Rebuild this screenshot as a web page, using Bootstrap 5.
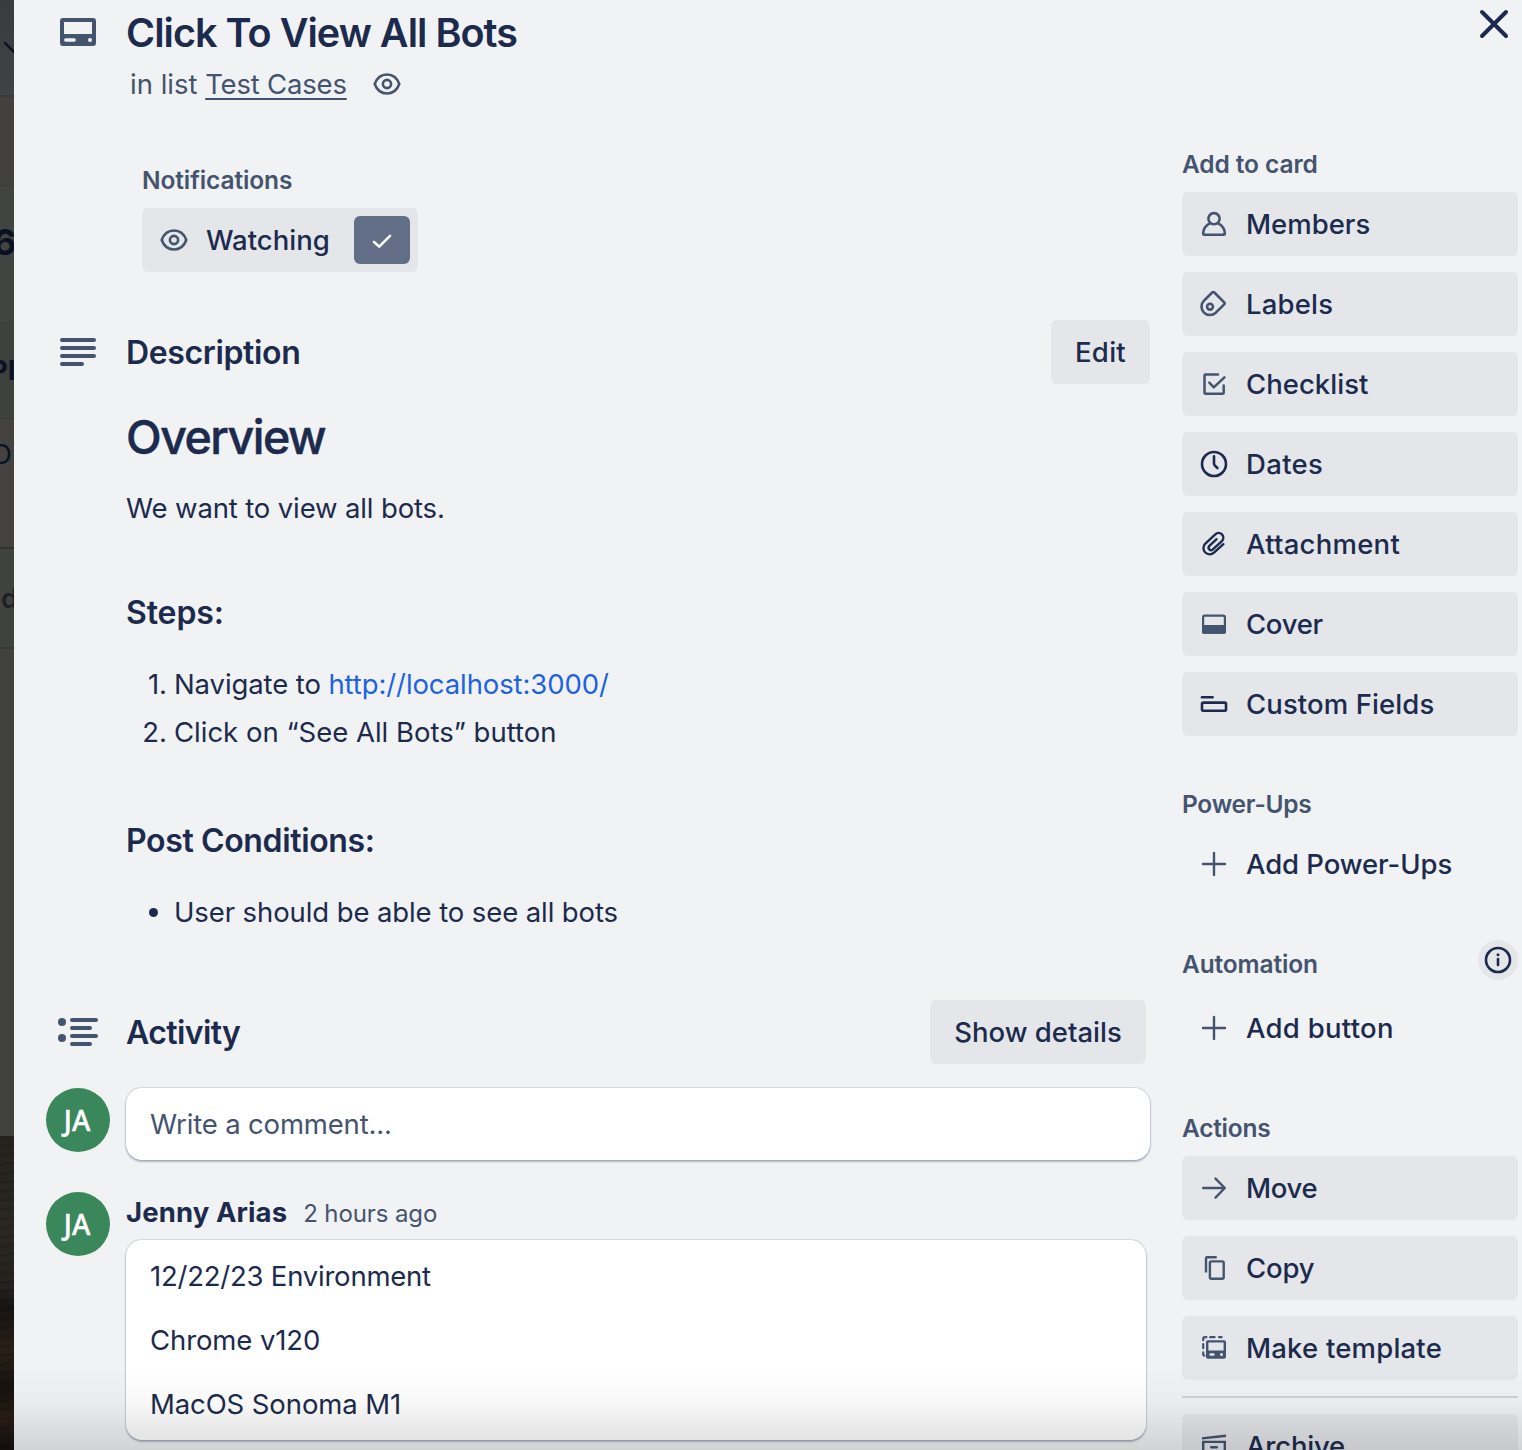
<!DOCTYPE html>
<html lang="en">
<head>
<meta charset="utf-8">
<meta name="viewport" content="width=device-width, initial-scale=1">
<title>Click To View All Bots</title>
<link href="https://cdn.jsdelivr.net/npm/bootstrap@5.3.0/dist/css/bootstrap.min.css" rel="stylesheet">
<script src="https://cdn.jsdelivr.net/npm/bootstrap@5.3.0/dist/js/bootstrap.bundle.min.js"></script>
<style>
:root{--ink:#1c2b4d;--muted:#44546f;--panel:#f1f2f4;--chip:#e4e6ea}
body{font-family:Inter,"Noto Sans",sans-serif;font-size:27.5px;line-height:40px;color:var(--ink);background:var(--panel);letter-spacing:-.1px}
.screen{height:1450px}
svg{display:block;flex:none;fill:none;stroke:currentColor;stroke-linecap:round;stroke-linejoin:round}
.tone-muted{color:var(--muted)}
.tone-ink{color:var(--ink)}

/* dimmed board behind the dialog */
.board-edge{width:14px;flex:none;background:#404040;color:#0a1122}
.board-edge>div{overflow:hidden;white-space:nowrap;flex:none;display:flex;align-items:center}
.edge-top{height:95px;background:linear-gradient(#3a3b3d,#404246)}
.edge-a{height:90px;border-top:2px solid #38393b;background:#434140}
.edge-b{height:137px;border-top:1px solid #3a3a3a;background:#414441;font-size:36px;font-weight:700;padding-bottom:24px}
.edge-c{height:96px;background:#3f413f;font-weight:700}
.edge-d{height:129px;border-top:1px solid #363839;background:#434241;padding-bottom:58px}
.edge-e{height:100px;border-top:2px solid #303236;background:#3f423f;font-weight:600;color:#1c1f26}
.edge-f{height:489px;border-top:2px solid #35373a;background:#414140}
.edge-g{height:314px;background:repeating-linear-gradient(172deg,rgba(0,0,0,.12) 0 3px,transparent 3px 9px),linear-gradient(#25231d,#2b2822 30%,#24221e 48%,#171412 55%,#2b2019 68%,#17120f 80%,#271c15 90%,#120e0b)}
.shift-6{margin-left:-7px}.shift-p{margin-left:-10px;letter-spacing:0}.shift-d{margin-left:-8px}.shift-e{margin-left:1px}

/* main column */
.main-col{width:1136px;flex:none;padding-top:9px}
.gutter{width:112px;flex:none}
.gutter-icon{padding-left:44px}
.gutter-avatar{padding-left:32px}
.indent{padding-left:112px}
.card-title-lg{font-size:39.5px;line-height:48px;font-weight:600;letter-spacing:-.95px;margin:0}
.sub-line{line-height:36px;height:36px;margin-top:9px;padding-left:116px;letter-spacing:0}
.sub-line a{color:inherit;text-decoration-thickness:2px;text-underline-offset:4px;letter-spacing:-.2px}
.sub-line svg{margin-left:24px}
.label-sm{font-size:24.5px;line-height:32px;font-weight:600;color:var(--muted);margin:0}
.notif{margin-top:62px;padding-left:128px}
.watch{width:276px;height:64px;margin-top:12px;padding:0 8px 0 16px;background:var(--chip);border-radius:6px;font-weight:500;letter-spacing:0}
.watch-tick{width:56px;height:48px;background:#626f86;border-radius:6px;color:#fff}
.sect{height:64px}
.sect-title{font-size:32px;line-height:40px;font-weight:600;letter-spacing:-.36px;margin:0;padding-top:2px}
.indent .sect-title{padding-top:1px;margin:64px 0 0}
.chip-btn{--bs-btn-font-size:27.5px;--bs-btn-font-weight:500;--bs-btn-line-height:40px;--bs-btn-padding-x:0;--bs-btn-padding-y:0;--bs-btn-border-width:0;--bs-btn-border-radius:6px;--bs-btn-bg:var(--chip);--bs-btn-color:var(--ink);--bs-btn-hover-bg:#d8dbe0;height:64px}
.overview{font-size:46.5px;line-height:56px;font-weight:500;-webkit-text-stroke:.5px var(--ink);letter-spacing:-1.5px;margin:25px 0 0}
.body-list{margin:27px 0 0;padding-left:48px}
.body-list li{line-height:48px;padding:0}
ol.body-list{counter-reset:step;list-style:none}
ol.body-list li::before{counter-increment:step;content:counter(step) ".";display:inline-block;width:40px;margin-left:-40px;padding-right:7px;text-align:right;letter-spacing:0}
.body-link{color:#1d63e0;text-decoration:none}
.avatar{width:64px;height:64px;background:#3b875c;color:#fff;font-family:"Noto Sans",sans-serif;font-size:28px;font-weight:500;-webkit-text-stroke:.4px #fff;letter-spacing:0;padding-right:2px}
.bubble{background:#fff;border-radius:16px;box-shadow:0 2px 2px rgba(9,30,66,.25),0 0 1px 1px rgba(9,30,66,.13)}
.box-comment{height:72px;padding:16px 24px;letter-spacing:-.16px}
.who-line{height:40px}
.box-entry{width:1020px;height:200px;padding:4px 24px;margin-top:8px}
.box-entry p{line-height:64px;margin:0}
.when{font-size:24px}

/* sidebar */
.side-col{width:336px;flex:none;margin-left:32px;padding-top:148px}
.side-btn{padding-left:16px;gap:16px;text-align:left}
.side-plain{--bs-btn-bg:transparent}
.info-dot{width:40px;height:40px;background:var(--chip)}
.rule{height:2px;background:#cfd2da;margin:16px 0}
.close-x{top:4px;right:8px}
.bottom-fade{left:14px;right:0;bottom:0;height:84px;background:linear-gradient(rgba(0,0,0,0),rgba(0,0,0,.025) 40%,rgba(0,0,0,.13));pointer-events:none}
</style>
</head>
<body class="overflow-hidden">
<div class="screen d-flex position-relative overflow-hidden">

  <div class="board-edge d-flex flex-column" aria-hidden="true">
    <div class="edge-top"><svg width="14" height="95" stroke-width="2.4"><path d="M5 43 16 54"/></svg></div>
    <div class="edge-a"></div>
    <div class="edge-b"><span class="shift-6">6</span></div>
    <div class="edge-c"><span class="shift-p">PI</span></div>
    <div class="edge-d"><span class="shift-d">D</span></div>
    <div class="edge-e"><span class="shift-e">d</span></div>
    <div class="edge-f"></div>
    <div class="edge-g"></div>
  </div>

  <main class="main-col">
    <header>
      <div class="d-flex align-items-center">
        <div class="gutter gutter-icon tone-muted">
          <svg width="40" height="40" viewBox="0 0 40 40"><path d="M5 5H35Q38 5 38 8V30Q38 33 35 33H5Q2 33 2 30V8Q2 5 5 5ZM6 9V21H34V9Z" fill="currentColor" fill-rule="evenodd" stroke="none"/><path d="M7.800 27H16" stroke="#f1f2f4" stroke-width="3.600"/><circle cx="32" cy="27" r="2" fill="#f1f2f4" stroke="none"/></svg>
        </div>
        <h1 class="card-title-lg">Click To View All Bots</h1>
      </div>
      <div class="sub-line d-flex align-items-center tone-muted">
        <span>in list <a href="#">Test Cases</a></span>
        <svg width="32" height="32" viewBox="0 0 32 32" stroke-width="2.6"><path d="M3.700 16C5.800 10.200 10.500 6.500 16 6.500S26.200 10.200 28.300 16C26.200 21.800 21.500 25.500 16 25.500S5.800 21.800 3.700 16Z"/><circle cx="16" cy="16" r="4.100"/></svg>
      </div>
    </header>

    <section class="notif">
      <h3 class="label-sm">Notifications</h3>
      <div class="watch d-flex align-items-center">
        <svg class="tone-muted" width="32" height="32" viewBox="0 0 32 32" stroke-width="2.6"><path d="M3.700 16C5.800 10.200 10.500 6.500 16 6.500S26.200 10.200 28.300 16C26.200 21.800 21.500 25.500 16 25.500S5.800 21.800 3.700 16Z"/><circle cx="16" cy="16" r="4.100"/></svg>
        <span class="ms-3">Watching</span>
        <span class="watch-tick ms-auto d-flex align-items-center justify-content-center"><svg width="32" height="32" viewBox="0 0 32 32" stroke-width="2.600"><path d="M8 18 13.200 22.600 24 11.800"/></svg></span>
      </div>
    </section>

    <section class="mt-5">
      <div class="sect d-flex align-items-center">
        <div class="gutter gutter-icon tone-muted"><svg width="40" height="40" viewBox="0 0 40 40" stroke-width="4"><path d="M4 8H36M4 16H36M4 24H36M4 32H24"/></svg></div>
        <h2 class="sect-title">Description</h2>
        <button class="btn chip-btn ms-auto" style="width:99px;letter-spacing:.3px">Edit</button>
      </div>
      <div class="indent">
        <h1 class="overview">Overview</h1>
        <p class="mb-0" style="margin-top:23px;letter-spacing:-.14px">We want to view all bots.</p>
        <h2 class="sect-title" style="letter-spacing:-.1px">Steps:</h2>
        <ol class="body-list">
          <li>Navigate to <a class="body-link" href="#">http://localhost:3000/</a></li>
          <li style="letter-spacing:0">Click on “See All Bots” button</li>
        </ol>
        <h2 class="sect-title">Post Conditions:</h2>
        <ul class="body-list">
          <li>User should be able to see all bots</li>
        </ul>
      </div>
    </section>

    <section style="margin-top:64px">
      <div class="sect d-flex align-items-center">
        <div class="gutter gutter-icon tone-muted"><svg width="44" height="40" viewBox="0 0 44 40" stroke-width="4"><path d="M14 8H38M14 16H32M14 24H38M14 32H32"/><g fill="currentColor" stroke="none"><circle cx="4" cy="10" r="4"/><circle cx="4" cy="26" r="4"/></g></svg></div>
        <h2 class="sect-title" style="letter-spacing:-.6px">Activity</h2>
        <button class="btn chip-btn ms-auto me-1" style="width:216px;letter-spacing:0">Show details</button>
      </div>
      <div class="d-flex mt-4">
        <div class="gutter gutter-avatar"><div class="avatar rounded-circle d-flex align-items-center justify-content-center">JA</div></div>
        <div class="bubble box-comment flex-grow-1 tone-muted">Write a comment...</div>
      </div>
      <div class="d-flex" style="margin-top:32px">
        <div class="gutter gutter-avatar"><div class="avatar rounded-circle d-flex align-items-center justify-content-center">JA</div></div>
        <div>
          <div class="who-line d-flex align-items-baseline"><strong style="letter-spacing:.1px">Jenny Arias</strong><span class="when tone-muted ms-3">2 hours ago</span></div>
          <div class="bubble box-entry">
            <p style="letter-spacing:-.22px">12/22/23 Environment</p>
            <p>Chrome v120</p>
            <p>MacOS Sonoma M1</p>
          </div>
        </div>
      </div>
    </section>
  </main>

  <aside class="side-col">
    <h3 class="label-sm">Add to card</h3>
    <div class="d-grid gap-3" style="margin-top:12px">
      <button class="btn chip-btn side-btn d-flex align-items-center" style="letter-spacing:0"><svg class="tone-muted" width="32" height="32" viewBox="0 0 32 32" stroke-width="2.600"><circle cx="16" cy="10.700" r="5.600"/><path d="M12.200 15.200C8 17.200 5.400 20.600 5.200 25.600Q5.200 26.800 6.400 26.800H25.600Q26.800 26.800 26.800 25.600C26.600 20.600 24 17.200 19.800 15.200"/></svg>Members</button>
      <button class="btn chip-btn side-btn d-flex align-items-center" style="letter-spacing:.2px"><svg class="tone-muted" width="32" height="32" viewBox="0 0 32 32" stroke-width="2.600"><path d="M14.200 4.500 6 12.700A8.500 8.500 0 0 0 3.500 18.700 8.300 8.300 0 0 0 11.800 27 9 9 0 0 0 17.800 24.700L26.200 16.300Q27.200 15.300 26.200 14.300L16.400 4.500Q15.300 3.500 14.200 4.500Z"/><circle cx="12" cy="18.700" r="2.900"/></svg>Labels</button>
      <button class="btn chip-btn side-btn d-flex align-items-center" style="letter-spacing:.03px"><svg class="tone-muted" width="32" height="32" viewBox="0 0 32 32" stroke-width="2.500"><path d="M20 6.500H7.500Q6.500 6.500 6.500 7.500V24.800Q6.500 25.800 7.500 25.800H24.700Q25.700 25.800 25.700 24.800V17.500M11.300 14.700 15.800 19.400 26.400 9.400"/></svg>Checklist</button>
      <button class="btn chip-btn side-btn d-flex align-items-center" style="letter-spacing:.35px"><svg width="32" height="32" viewBox="0 0 32 32" stroke-width="2.600"><circle cx="16" cy="16" r="12"/><path d="M16 8.300V15.600Q16 16.600 16.700 17.300L19.400 20"/></svg>Dates</button>
      <button class="btn chip-btn side-btn d-flex align-items-center" style="letter-spacing:.25px"><svg width="32" height="32" viewBox="0 0 32 32" stroke-width="2.400"><path d="M25.400 16.200 16 24.700A6.300 6.300 0 0 1 7.100 15.800L17.300 6.400A4.700 4.700 0 0 1 23.900 13.100L14.600 21.600A2.500 2.500 0 0 1 11.100 18.100L18.600 11.200"/></svg>Attachment</button>
      <button class="btn chip-btn side-btn d-flex align-items-center" style="letter-spacing:-.3px"><svg class="tone-muted" width="32" height="32" viewBox="0 0 32 32" stroke-width="2.200"><rect x="5.100" y="7.600" width="21.800" height="17" rx="1.600"/><path d="M5.100 18.100H26.900V24.600H5.100Z" fill="currentColor"/></svg>Cover</button>
      <button class="btn chip-btn side-btn d-flex align-items-center" style="letter-spacing:.1px"><svg width="32" height="32" viewBox="0 0 32 32" stroke-width="2.600"><path d="M4 9.200H14.500"/><rect x="4" y="14.600" width="24" height="8.200" rx="1.200"/></svg>Custom Fields</button>
    </div>

    <h3 class="label-sm" style="margin-top:52px;letter-spacing:-.25px">Power-Ups</h3>
    <button class="btn chip-btn side-btn side-plain d-flex align-items-center w-100" style="margin-top:12px;letter-spacing:-.08px"><svg class="tone-muted" width="32" height="32" viewBox="0 0 32 32" stroke-width="2.400"><path d="M16 5V27M5 16H27"/></svg>Add Power-Ups</button>

    <div class="d-flex justify-content-between" style="height:40px;margin-top:44px">
      <h3 class="label-sm align-self-end" style="letter-spacing:-.15px">Automation</h3>
      <span class="info-dot rounded-circle d-flex align-items-center justify-content-center"><svg width="32" height="32" viewBox="0 0 32 32" stroke-width="2.600"><circle cx="16" cy="16" r="12"/><path d="M16 15V21"/><circle cx="16" cy="10.800" r="1.500" fill="currentColor" stroke="none"/></svg></span>
    </div>
    <button class="btn chip-btn side-btn side-plain d-flex align-items-center w-100 mt-3" style="letter-spacing:.28px"><svg class="tone-muted" width="32" height="32" viewBox="0 0 32 32" stroke-width="2.400"><path d="M16 5V27M5 16H27"/></svg>Add button</button>

    <h3 class="label-sm" style="margin-top:52px;letter-spacing:-.25px">Actions</h3>
    <div class="d-grid gap-3" style="margin-top:12px">
      <button class="btn chip-btn side-btn d-flex align-items-center" style="letter-spacing:-.35px"><svg class="tone-muted" width="32" height="32" viewBox="0 0 32 32" stroke-width="2.400"><path d="M5.200 16H26.500M17.500 6.600 26.800 16 17.500 25.600"/></svg>Move</button>
      <button class="btn chip-btn side-btn d-flex align-items-center" style="letter-spacing:-.2px"><svg class="tone-muted" width="32" height="32" viewBox="0 0 32 32" stroke-width="2.400"><path d="M18.700 5.200H9.200Q8 5.200 8 6.400V20.500" stroke-linecap="butt"/><rect x="11.900" y="9.400" width="13.800" height="17.400" rx="1.500"/></svg>Copy</button>
      <button class="btn chip-btn side-btn d-flex align-items-center" style="letter-spacing:.2px"><svg class="tone-muted" width="32" height="32" viewBox="0 0 32 32" stroke-width="2.200"><path d="M5.200 8.200V7Q5.200 5.200 7 5.200H8.400M12.200 5.200H16.600M21 5.200H23.600M5.200 12.200V16.200M5.200 20.400V21.800Q5.200 23.600 6.400 23.600"/><path d="M10 8.200H26Q28 8.200 28 10.200V24.700Q28 26.700 26 26.700H10Q8 26.700 8 24.700V10.200Q8 8.200 10 8.200ZM10.400 10.600V18.600H25.600V10.600Z" fill="currentColor" fill-rule="evenodd" stroke="none"/><path d="M12.700 22.500H15.300" stroke="#e4e6ea" stroke-width="2.600"/><circle cx="23.500" cy="22.500" r="1.500" fill="#e4e6ea" stroke="none"/></svg>Make template</button>
    </div>
    <div class="rule"></div>
    <button class="btn chip-btn side-btn d-flex align-items-center w-100" style="letter-spacing:-.2px"><svg class="tone-muted" width="32" height="32" viewBox="0 0 32 32" stroke-width="2.400"><path d="M4 8.400 28 5.800" stroke-linecap="butt"/><path d="M5.200 28V11.900H26.800V28Z" stroke-linejoin="miter"/><path d="M13.200 17.300H18.800"/></svg>Archive</button>
  </aside>

  <button class="btn border-0 p-0 position-absolute close-x tone-ink" aria-label="Close"><svg width="40" height="40" viewBox="0 0 40 40" stroke-width="4"><path d="M8 8 32 32M32 8 8 32"/></svg></button>
  <div class="bottom-fade position-absolute"></div>
</div>
</body>
</html>
